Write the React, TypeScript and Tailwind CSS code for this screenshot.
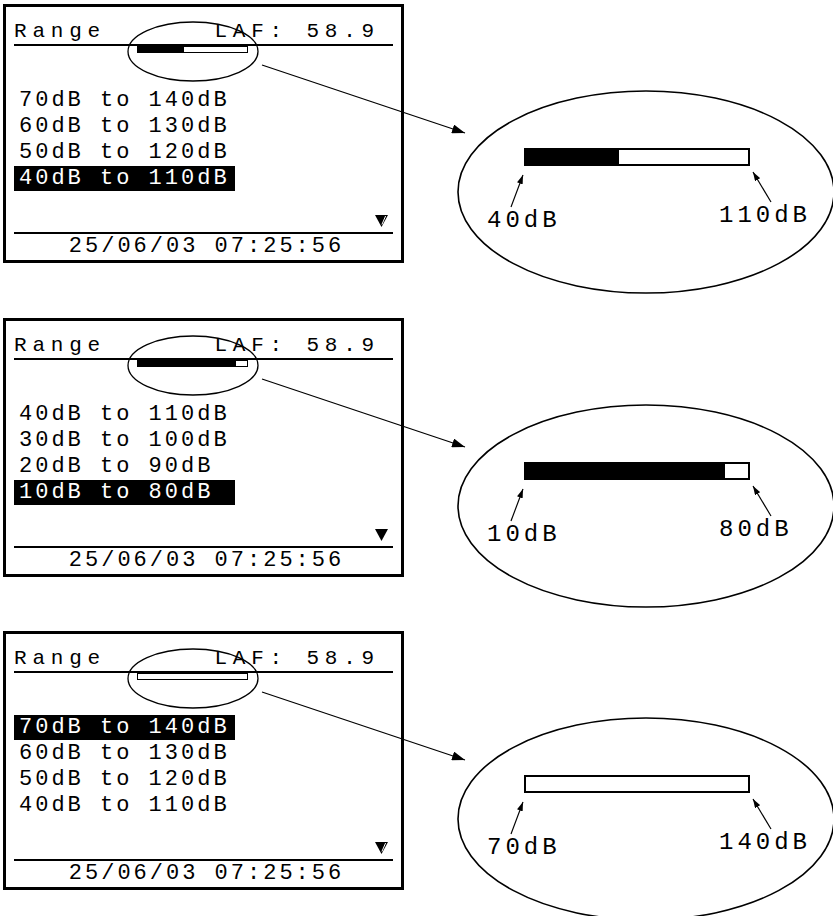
import React from "react";

const MONO = "font-['Liberation_Mono','Courier_New',monospace]";

type Panel = {
  lines: string[];
  sel: number;
  fill: number;
  lo: string;
  hi: string;
  glitch: boolean;
};

const panels: Panel[] = [
  {
    lines: ["70dB to 140dB", "60dB to 130dB", "50dB to 120dB", "40dB to 110dB"],
    sel: 3,
    fill: 0.42,
    lo: "40dB",
    hi: "110dB",
    glitch: true,
  },
  {
    lines: ["40dB to 110dB", "30dB to 100dB", "20dB to 90dB", "10dB to 80dB"],
    sel: 3,
    fill: 0.895,
    lo: "10dB",
    hi: "80dB",
    glitch: false,
  },
  {
    lines: ["70dB to 140dB", "60dB to 130dB", "50dB to 120dB", "40dB to 110dB"],
    sel: 0,
    fill: 0,
    lo: "70dB",
    hi: "140dB",
    glitch: true,
  },
];

function Triangle({ glitch }: { glitch: boolean }) {
  return (
    <svg width="13" height="12" viewBox="0 0 13 12">
      <polygon points="0,0 13,0 6.5,12" fill="#000" />
      {glitch && <line x1="10.6" y1="1" x2="6.9" y2="9.5" stroke="#fff" strokeWidth="1" />}
    </svg>
  );
}

function Screen({ p }: { p: Panel }) {
  return (
    <div className={`w-[401px] h-[259px] border-[3px] border-black bg-white flex flex-col px-[8px] text-black ${MONO}`}>
      <div className="h-[37px] flex items-end justify-between pb-px pr-[13px] text-[21px] leading-[22px] tracking-[5.8px] whitespace-pre">
        <span>Range</span>
        <span>LAF: 58.9</span>
      </div>
      <div className="h-[2px] bg-black" />
      <div className="ml-[123px] w-[111px] h-[7px] border border-black flex">
        <div className="h-full bg-black" style={{ width: `${p.fill * 100}%` }} />
      </div>
      <div className="mt-[35px] flex flex-col">
        {p.lines.map((l, i) => (
          <div key={i} className="h-[26px]">
            <div
              className={`w-[221px] h-[25px] pl-[5px] leading-[25px] text-[22px] tracking-[3px] whitespace-pre ${
                i === p.sel ? "bg-black text-white" : "text-black"
              }`}
            >
              {l}
            </div>
          </div>
        ))}
      </div>
      <div className="flex-1" />
      <div className="flex justify-end mr-[5px] mb-[5px]">
        <Triangle glitch={p.glitch} />
      </div>
      <div className="h-[2px] bg-black" />
      <div className="h-[26px] leading-[26px] text-center text-[22px] tracking-[3px] pl-[6px] whitespace-pre">
        25/06/03 07:25:56
      </div>
    </div>
  );
}

function Overlay() {
  return (
    <svg
      className="absolute left-0 top-0 pointer-events-none overflow-visible"
      width="833"
      height="300"
      viewBox="0 0 833 300"
    >
      <defs>
        <marker id="ahBig" viewBox="0 0 13 9" refX="13" refY="4.5" markerWidth="13" markerHeight="9" markerUnits="userSpaceOnUse" orient="auto">
          <path d="M0,0 L13,4.5 L0,9 z" fill="#000" />
        </marker>
        <marker id="ahSmall" viewBox="0 0 9 6" refX="9" refY="3" markerWidth="9" markerHeight="6" markerUnits="userSpaceOnUse" orient="auto">
          <path d="M0,0 L9,3 L0,6 z" fill="#000" />
        </marker>
      </defs>
      <ellipse cx="193" cy="47.5" rx="65" ry="29.5" fill="none" stroke="#000" strokeWidth="1.3" />
      <line x1="262" y1="61" x2="465" y2="129" stroke="#000" strokeWidth="1.3" markerEnd="url(#ahBig)" />
      <ellipse cx="646" cy="188" rx="188" ry="101" fill="none" stroke="#000" strokeWidth="1.6" />
      <line x1="511" y1="203" x2="523" y2="171" stroke="#000" strokeWidth="1.2" markerEnd="url(#ahSmall)" />
      <line x1="771" y1="198" x2="753" y2="168" stroke="#000" strokeWidth="1.2" markerEnd="url(#ahSmall)" />
    </svg>
  );
}

function Row({ p, className }: { p: Panel; className?: string }) {
  return (
    <div className={`relative w-[833px] ${className ?? ""}`}>
      <div className="ml-[3px]">
        <Screen p={p} />
      </div>
      <Overlay />
      <div className="absolute left-[524px] top-[144px] w-[226px] h-[18px] border-2 border-black bg-white flex">
        <div className="h-full bg-black" style={{ width: `${p.fill * 100}%` }} />
      </div>
      <div className={`absolute left-[487px] top-[205px] text-[24px] leading-[24px] tracking-[4px] text-black ${MONO}`}>
        {p.lo}
      </div>
      <div className={`absolute left-[719px] top-[200px] text-[24px] leading-[24px] tracking-[4px] text-black ${MONO}`}>
        {p.hi}
      </div>
    </div>
  );
}

export default function App() {
  return (
    <div className="w-[833px] h-[916px] overflow-hidden bg-white relative">
      <div className="flex flex-col pt-[4px]">
        <Row p={panels[0]} />
        <Row p={panels[1]} className="mt-[55px]" />
        <Row p={panels[2]} className="mt-[54px]" />
      </div>
    </div>
  );
}
